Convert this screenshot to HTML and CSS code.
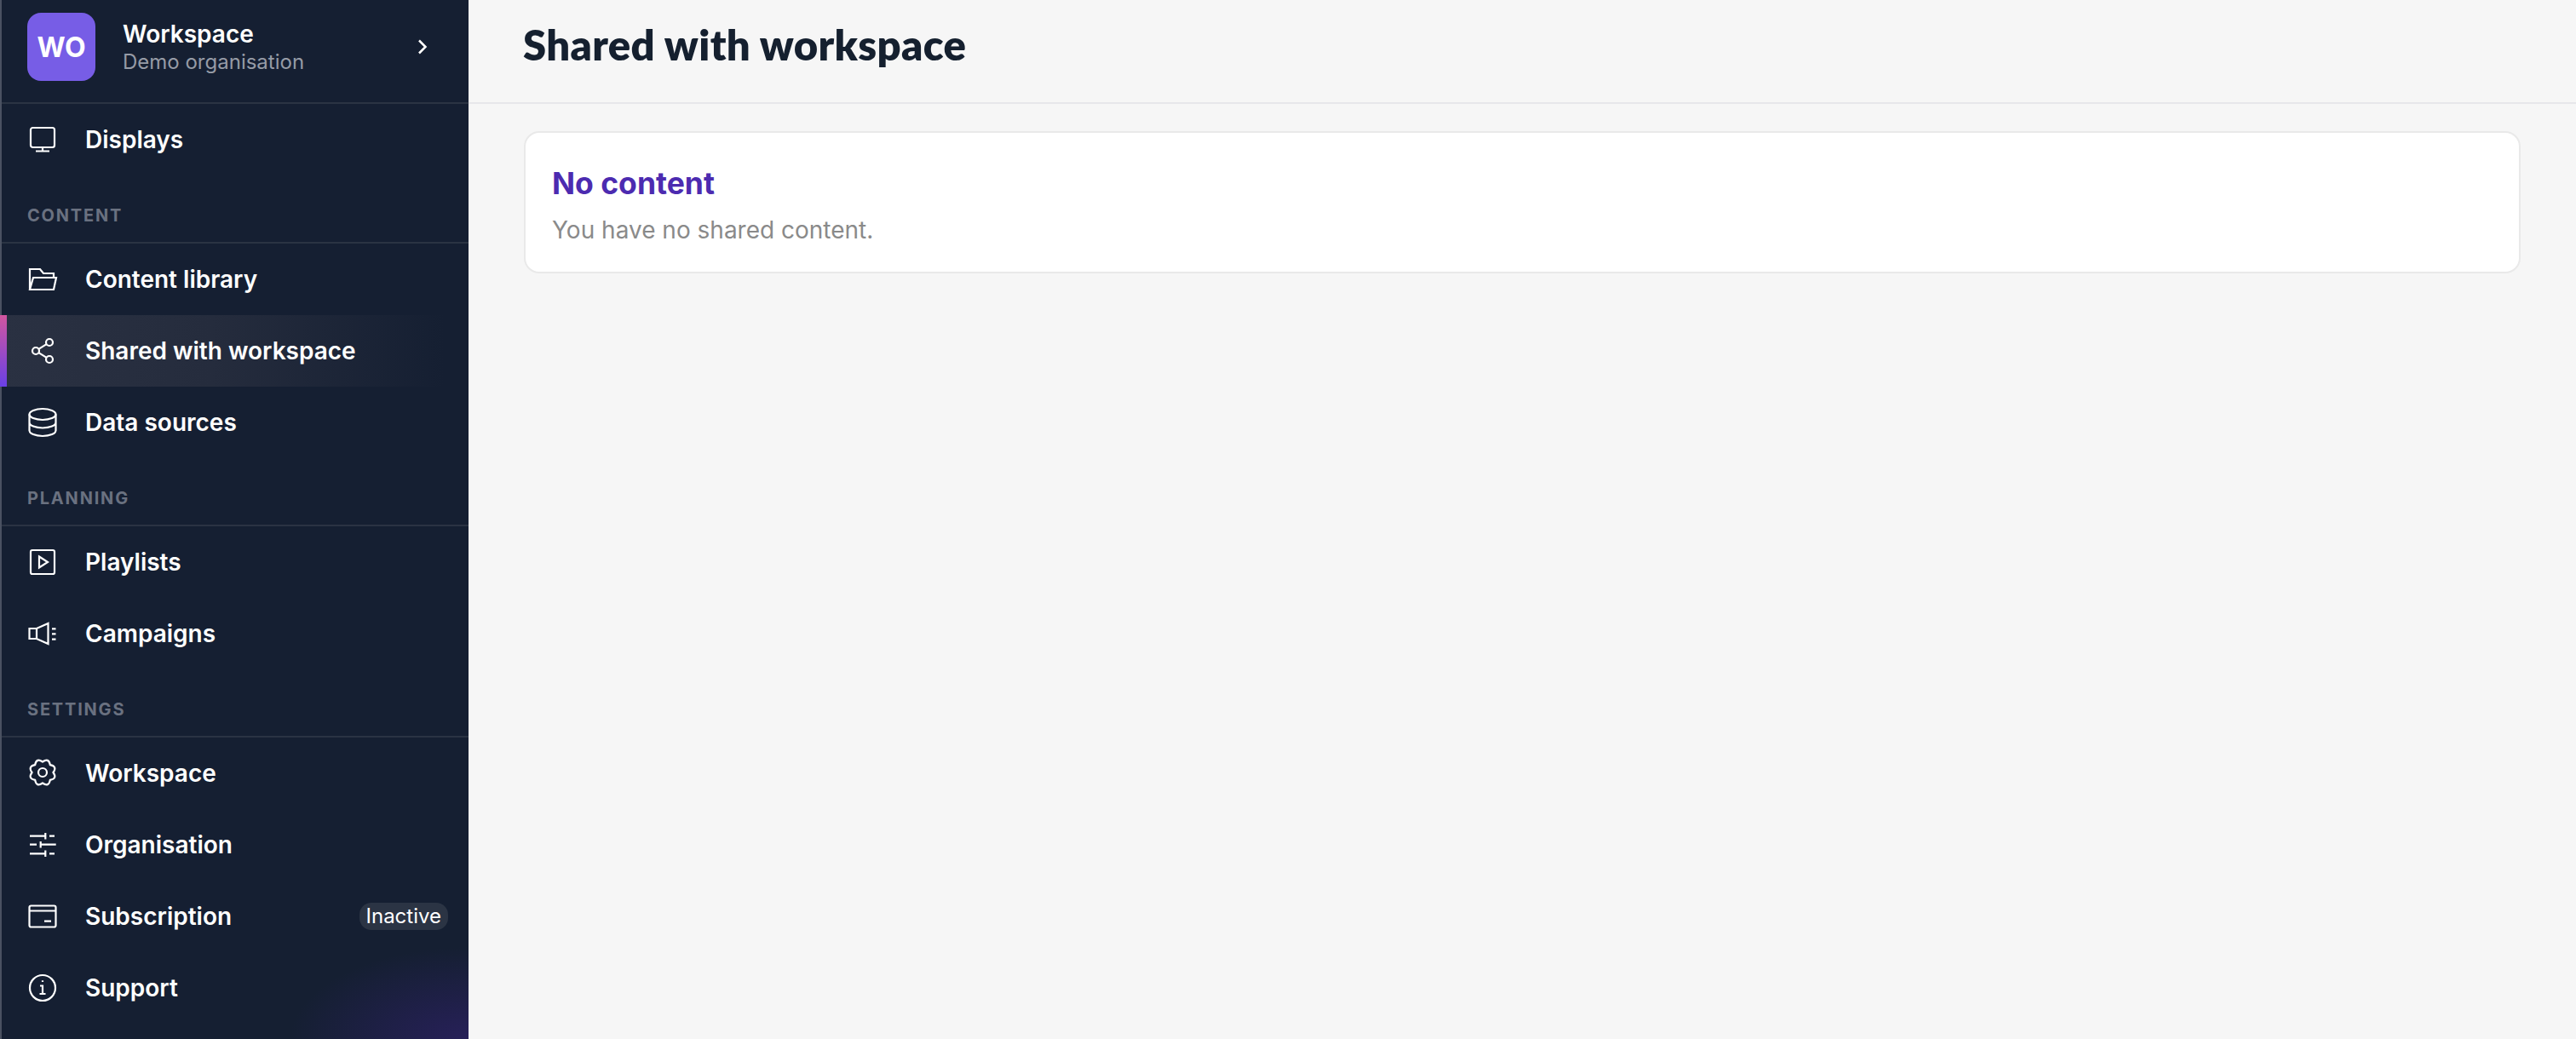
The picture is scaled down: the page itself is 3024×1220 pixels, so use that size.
FILE: index.html
```html
<!DOCTYPE html>
<html lang="en">
<head>
<meta charset="utf-8">
<title>Shared with workspace</title>
<link rel="stylesheet" href="styles.css">
</head>
<body>
<div class="app">
  <aside class="sidebar">
    <div class="account">
      <div class="logo">WO</div>
      <div class="account-text">
        <div class="account-name">Workspace</div>
        <div class="account-org">Demo organisation</div>
      </div>
      <svg class="chevron" viewBox="0 0 12 20"><path d="M2 2.500 9.500 10 2 17.500"/></svg>
    </div>
    <nav class="nav">
      <a class="item">
        <svg class="icon" viewBox="0 0 40 40"><rect x="6" y="6" width="28" height="23" rx="2.500"/><path d="M20 29v4M12 33.500h16"/></svg>
        <span>Displays</span>
      </a>
      <div class="section">Content</div>
      <a class="item">
        <svg class="icon" viewBox="0 0 40 40"><path d="M5 32V8h12l4 5h12v5M5 32l4-14h27l-3 14z"/></svg>
        <span>Content library</span>
      </a>
      <a class="item active">
        <svg class="icon" viewBox="0 0 40 40"><circle cx="28" cy="10" r="4"/><circle cx="12" cy="20" r="4"/><circle cx="28" cy="30" r="4"/><path d="M15.400 17.900 24.600 12.100M15.400 22.100 24.600 27.900"/></svg>
        <span>Shared with workspace</span>
      </a>
      <a class="item">
        <svg class="icon" viewBox="0 0 40 40"><ellipse cx="20" cy="10.500" rx="15.500" ry="6.500"/><path d="M4.500 10.500v19c0 3.600 6.900 6.500 15.500 6.500s15.500-2.900 15.500-6.500v-19M4.500 20c0 3.600 6.900 6.500 15.500 6.500s15.500-2.900 15.500-6.500"/></svg>
        <span>Data sources</span>
      </a>
      <div class="section">Planning</div>
      <a class="item">
        <svg class="icon" viewBox="0 0 40 40"><rect x="6" y="6" width="28" height="28" rx="2"/><path d="M16 13.500 26 20l-10 6.500z"/></svg>
        <span>Playlists</span>
      </a>
      <a class="item">
        <svg class="icon" viewBox="0 0 40 40"><path d="M4.500 14H13l13.500-6v24L13 26H4.500zM13 14v12M31 14.300h4.500M31 20.300h4.500M31 26.700h4.500"/></svg>
        <span>Campaigns</span>
      </a>
      <div class="section">Settings</div>
      <a class="item">
        <svg class="icon" viewBox="0 0 40 40"><path d="M20 6.500Q27.270 1.450 28.840 10.160 37.550 11.730 32.500 19 37.550 26.270 28.840 27.840 27.270 36.550 20 31.500 12.730 36.550 11.160 27.840 2.450 26.270 7.500 19 2.450 11.730 11.160 10.160 12.730 1.450 20 6.500z"/><circle cx="20" cy="19" r="5"/></svg>
        <span>Workspace</span>
      </a>
      <a class="item">
        <svg class="icon" viewBox="0 0 40 40"><path d="M5 9.700h18M23.300 6v7.500M28 9.700h6M5 19.700h8M17.700 16v7.500M17.700 19.700h18M5 30.300h18M23.300 26.600v7.500M28 30.300h6"/></svg>
        <span>Organisation</span>
      </a>
      <a class="item">
        <svg class="icon" viewBox="0 0 40 40"><rect x="4.500" y="7.500" width="31" height="25" rx="2"/><path d="M4.500 13.500h31M22 25.700h8"/></svg>
        <span>Subscription</span>
        <span class="badge">Inactive</span>
      </a>
      <a class="item">
        <svg class="icon" viewBox="0 0 40 40"><circle cx="20" cy="20" r="15"/><path d="M17 17.500h3v9.500M16.500 27h7M20 11.300v1.800"/></svg>
        <span>Support</span>
      </a>
    </nav>
  </aside>
  <main class="main">
    <header class="topbar">
      <h1 class="title">Shared with workspace</h1>
    </header>
    <section class="content">
      <div class="card">
        <h2 class="card-title">No content</h2>
        <p class="card-text">You have no shared content.</p>
      </div>
    </section>
  </main>
</div>
</body>
</html>
```
FILE: styles.css
```css
* { box-sizing: border-box; }
html, body { margin: 0; height: 100%; }
body {
  font-family: "Inter", "Liberation Sans", sans-serif;
  background: #f6f6f6;
  overflow: hidden;
}
.app { display: flex; height: 1220px; }

.sidebar {
  flex: 0 0 550px;
  border-left: 2px solid #4a5161;
  background:
    radial-gradient(ellipse 210px 110px at 548px 1222px, #272059 0%, rgba(39, 32, 89, 0) 100%),
    #151f32;
  color: #fff;
}
.account {
  display: flex;
  align-items: center;
  height: 122px;
  padding: 16px 48px 26px 30px;
  border-bottom: 2px solid #2a3343;
}
.logo {
  flex: 0 0 80px;
  height: 80px;
  display: flex;
  align-items: center;
  justify-content: center;
  border-radius: 16px;
  background: #775de6;
  font-size: 32px;
  font-weight: 700;
}
.account-text { flex: 1; margin-left: 32px; padding-top: 2px; }
.account-name { font-size: 28px; font-weight: 600; line-height: 34px; }
.account-org { font-size: 24px; line-height: 32px; color: #969ba6; }
.chevron { width: 12px; height: 20px; fill: none; stroke: #fff; stroke-width: 2.500; }

.item {
  position: relative;
  display: flex;
  align-items: center;
  height: 84px;
  padding: 0 24px 0 28px;
  font-size: 28px;
  font-weight: 600;
}
.item.active { background: linear-gradient(90deg, #2a3142 0%, #252c3d 45%, rgba(37, 44, 61, 0) 95%); }
.item.active::before {
  content: "";
  position: absolute;
  left: -2px;
  top: 0;
  bottom: 0;
  width: 8px;
  background: linear-gradient(180deg, #d2569f 0%, #6a40e6 100%);
}
.icon {
  flex: 0 0 40px;
  width: 40px;
  height: 40px;
  margin-right: 30px;
  fill: none;
  stroke: #fff;
  stroke-width: 2.200;
}
.section {
  height: 80px;
  padding: 36px 0 0 30px;
  border-bottom: 2px solid #2a3343;
  font-size: 20px;
  line-height: 22px;
  font-weight: 700;
  letter-spacing: 1.800px;
  text-transform: uppercase;
  color: #6a7180;
}
.badge {
  margin-left: auto;
  height: 32px;
  padding: 0 8px;
  border-radius: 14px;
  background: #2b3444;
  font-size: 24px;
  line-height: 32px;
  font-weight: 400;
}

.main { flex: 1; min-width: 0; }
.topbar {
  height: 122px;
  padding: 0 65px 16px 64px;
  border-bottom: 2px solid #e7e7ea;
  display: flex;
  align-items: center;
}
.title {
  margin: 0;
  font-family: "Lato", "Liberation Sans", sans-serif;
  font-size: 49px;
  font-weight: 800;
  letter-spacing: 0.350px;
  color: #15202f;
}
.content { padding: 32px 65px 0 65px; }
.card {
  height: 167px;
  padding: 38px 32px 0 31px;
  background: #fff;
  border: 2px solid #e9e9e9;
  border-radius: 18px;
}
.card-title {
  margin: 0;
  font-size: 35.500px;
  line-height: 44px;
  font-weight: 700;
  color: #4c2bb0;
}
.card-text {
  margin: 14px 0 0;
  font-size: 28px;
  line-height: 36px;
  color: #8a8a8a;
}
```
